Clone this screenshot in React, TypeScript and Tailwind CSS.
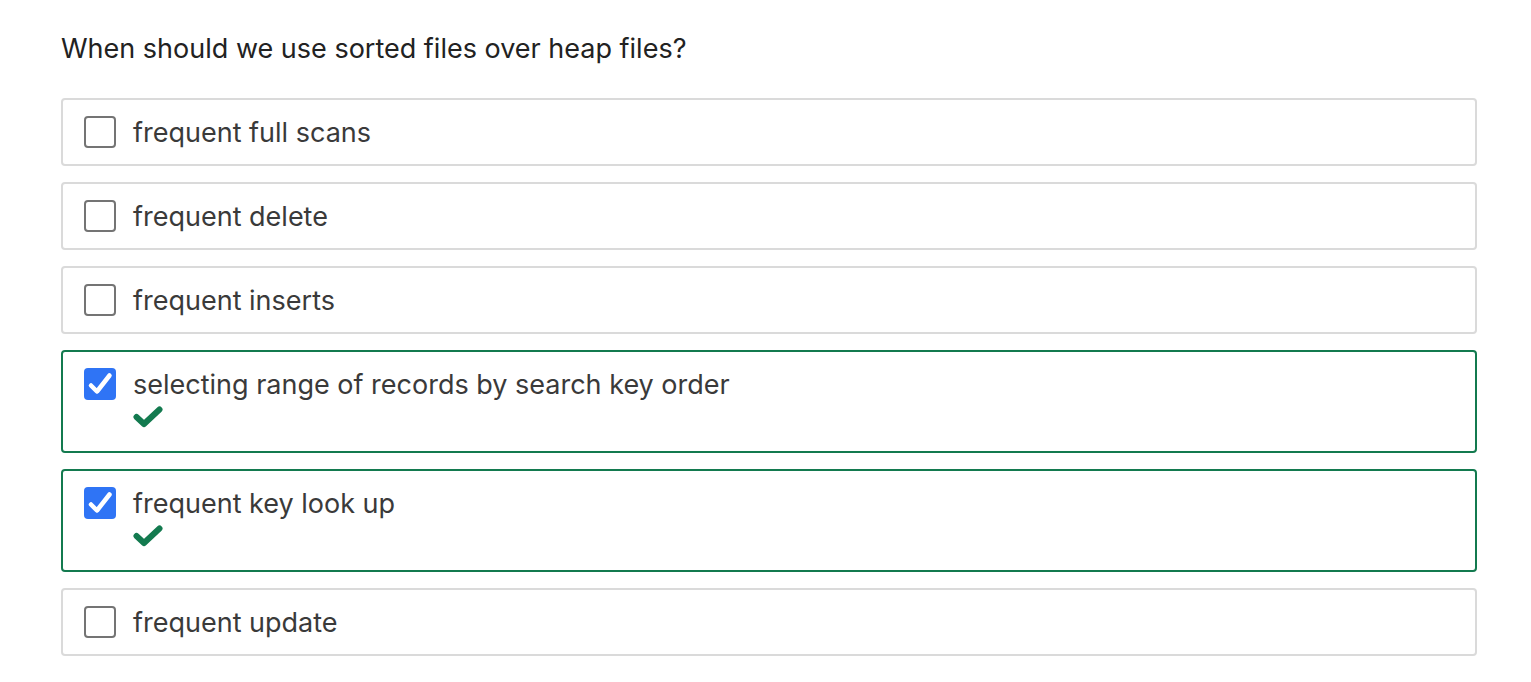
type Option = { label: string; checked: boolean };

const options: Option[] = [
  { label: "frequent full scans", checked: false },
  { label: "frequent delete", checked: false },
  { label: "frequent inserts", checked: false },
  { label: "selecting range of records by search key order", checked: true },
  { label: "frequent key look up", checked: true },
  { label: "frequent update", checked: false },
];

function Tick() {
  return (
    <svg width="30" height="22" viewBox="0 0 30 22" className="block">
      <path
        d="M3.5 11 L11 18 L26.5 3.5"
        fill="none"
        stroke="#137a4f"
        strokeWidth="6"
        strokeLinecap="round"
        strokeLinejoin="round"
      />
    </svg>
  );
}

function BoxCheck() {
  return (
    <svg width="32" height="32" viewBox="0 0 32 32" className="block">
      <path
        d="M7 17.5 L13 23.5 L25.5 7.5"
        fill="none"
        stroke="#fff"
        strokeWidth="4.5"
        strokeLinecap="round"
        strokeLinejoin="round"
      />
    </svg>
  );
}

function OptionRow({ option }: { option: Option }) {
  return (
    <div
      className={`flex items-start gap-[17px] rounded-[4px] border-2 px-[21px] py-4 ${
        option.checked ? "border-[#137a4f]" : "border-[#dadada]"
      }`}
    >
      {option.checked ? (
        <div className="h-8 w-8 shrink-0 rounded-[4px] bg-[#2f74f5]">
          <BoxCheck />
        </div>
      ) : (
        <div className="h-8 w-8 shrink-0 rounded-[4px] border-2 border-[#747474] bg-white" />
      )}
      <div className="flex flex-col">
        <span className="relative top-[1px] text-[27px] leading-8 text-[#3a3a3a]">
          {option.label}
        </span>
        {option.checked && (
          <div className="mt-[6px] mb-[7px]">
            <Tick />
          </div>
        )}
      </div>
    </div>
  );
}

export default function App() {
  return (
    <div className="min-h-screen bg-white font-['Inter',sans-serif]">
      <div className="mx-[61px] pt-[31px]">
        <h1 className="text-[27px] leading-9 text-[#222]">
          When should we use sorted files over heap files?
        </h1>
        <div className="mt-[31px] flex w-[1416px] flex-col gap-4">
          {options.map((o) => (
            <OptionRow key={o.label} option={o} />
          ))}
        </div>
      </div>
    </div>
  );
}
